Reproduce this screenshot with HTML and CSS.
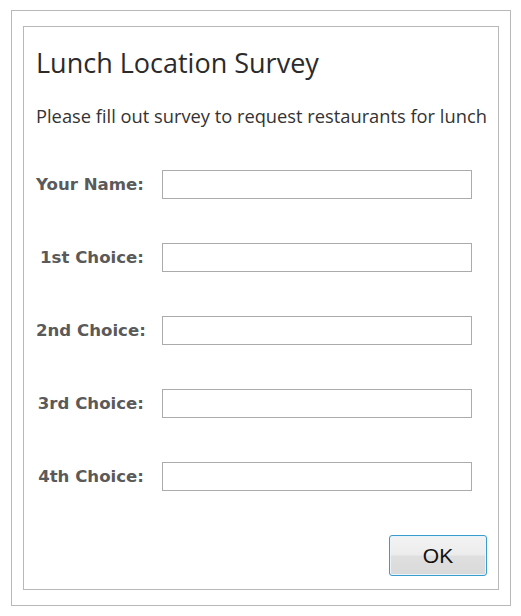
FILE: index.html
```html
<!DOCTYPE html>
<html>
<head>
<meta charset="utf-8">
<link rel="stylesheet" href="styles.css">
</head>
<body>
<div class="outer">
  <div class="dialog">
    <h1 class="title">Lunch Location Survey</h1>
    <p class="subtitle">Please fill out survey to request restaurants for lunch</p>
    <div class="form">
      <label class="label">Your Name:</label><input class="field" type="text">
      <label class="label">1st Choice:</label><input class="field" type="text">
      <label class="label">2nd Choice:</label><input class="field" type="text">
      <label class="label">3rd Choice:</label><input class="field" type="text">
      <label class="label">4th Choice:</label><input class="field" type="text">
    </div>
    <div class="actions">
      <button class="ok" type="button">OK</button>
    </div>
  </div>
</div>
</body>
</html>
```
FILE: styles.css
```css
html, body {
  margin: 0;
  padding: 0;
  background: #ffffff;
}
body {
  padding: 10px 10px 0 11px;
}
.outer {
  box-sizing: border-box;
  width: 500px;
  height: 596px;
  border: 1px solid #b8b8b8;
  padding: 15px 11px 15px 11px;
}
.dialog {
  box-sizing: border-box;
  height: 564px;
  border: 1px solid #b8b8b8;
  padding: 0 11px 0 12px;
  display: flex;
  flex-direction: column;
}
.title {
  margin: 18px 0 0 0;
  font-family: "Open Sans", sans-serif;
  font-weight: 400;
  font-size: 27px;
  line-height: 36px;
  color: #2b2b2b;
}
.subtitle {
  margin: 22px 0 0 0;
  font-family: "Open Sans", sans-serif;
  font-size: 18.3px;
  line-height: 26px;
  color: #333333;
}
.form {
  margin-top: 41px;
  display: grid;
  grid-template-columns: 108px 310px;
  column-gap: 18px;
  row-gap: 44px;
  align-items: center;
}
.label {
  text-align: right;
  font-family: "DejaVu Sans", sans-serif;
  font-weight: 700;
  font-size: 16.6px;
  color: #5a5a5a;
  white-space: nowrap;
}
.field {
  box-sizing: border-box;
  width: 310px;
  height: 29px;
  margin: 0;
  border: 1px solid #ababab;
  background: #ffffff;
  outline: none;
}
.actions {
  margin-top: auto;
  margin-bottom: 13px;
  display: flex;
  justify-content: flex-end;
}
.ok {
  box-sizing: border-box;
  width: 98px;
  height: 41px;
  border: 1px solid #3a9ccc;
  border-radius: 3px;
  box-shadow: inset 0 0 0 1px #e9f4fa;
  background: linear-gradient(#f3f3f3 0%, #ececec 48%, #dfdfdf 52%, #d9d9d9 100%);
  font-family: "Liberation Sans", Arial, sans-serif;
  font-size: 21px;
  color: #111111;
  padding: 0;
}
```
